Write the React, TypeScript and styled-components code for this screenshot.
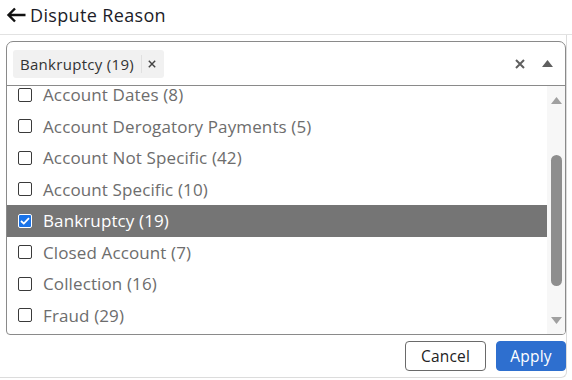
import React from 'react'
import styled, { createGlobalStyle } from 'styled-components'

const GlobalStyle = createGlobalStyle`
  html, body {
    margin: 0;
    padding: 0;
    background: #ffffff;
  }
  body {
    font-family: 'Open Sans', 'Liberation Sans', sans-serif;
  }
`

const Page = styled.div`
  width: 572px;
  height: 380px;
  overflow: hidden;
  background: #fff;
`

const Header = styled.div`
  height: 35px;
  box-sizing: border-box;
  display: flex;
  align-items: center;
  gap: 4px;
  padding: 0 0 5px 6px;
  border-bottom: 1px solid #e2e2e2;
`

const Title = styled.span`
  font-size: 18px;
  color: #1c1c28;
  letter-spacing: 0.35px;
`

const Panel = styled.div`
  width: 567px;
  box-sizing: border-box;
  padding: 6px 0 6px 6px;
  border-right: 1px solid #dcdcdc;
  border-bottom: 1px solid #dcdcdc;
  border-bottom-right-radius: 6px;
`

const SelectBox = styled.div`
  width: 560px;
  height: 294px;
  box-sizing: border-box;
  border: 1px solid #8a8a8a;
  border-radius: 7px 7px 4px 4px;
  display: flex;
  flex-direction: column;
  overflow: hidden;
`

const Control = styled.div`
  height: 44px;
  flex: none;
  box-sizing: border-box;
  display: flex;
  align-items: center;
  padding: 0 12px 0 6px;
  border-bottom: 1px solid #8a8a8a;
`

const Chip = styled.div`
  height: 28px;
  display: flex;
  align-items: center;
  background: #f1f1f1;
  border-radius: 3px;
  padding: 0 8px 0 7px;
  font-size: 15px;
  letter-spacing: 0.3px;
  color: #333;
`

const ChipDivider = styled.span`
  width: 1px;
  height: 18px;
  background: #e0e0e0;
  margin: 0 6px 0 7px;
`

const Spacer = styled.div`
  flex: 1;
`

const Indicators = styled.div`
  display: flex;
  align-items: center;
  gap: 17px;
`

const Body = styled.div`
  flex: 1;
  display: flex;
  min-height: 0;
`

const List = styled.div`
  flex: 1;
  overflow: hidden;
`

const ListInner = styled.div`
  margin-top: -7px;
`

const Row = styled.div<{ $active?: boolean }>`
  height: 31.5px;
  display: flex;
  align-items: center;
  gap: 11px;
  padding-left: 11px;
  background: ${(p) => (p.$active ? '#757575' : 'transparent')};
  color: ${(p) => (p.$active ? '#ffffff' : '#6d6d6d')};
  font-size: 17px;
  letter-spacing: 0.12px;
  white-space: nowrap;
`

const Box = styled.span<{ $checked?: boolean }>`
  width: 14px;
  height: 14px;
  box-sizing: border-box;
  border-radius: 2px;
  border: 1px solid ${(p) => (p.$checked ? '#ffffff' : '#3a3a3a')};
  background: ${(p) => (p.$checked ? '#1a73e8' : '#ffffff')};
  display: flex;
  align-items: center;
  justify-content: center;
  flex: none;
`

const Track = styled.div`
  width: 18px;
  flex: none;
  background: #f7f7f7;
  display: flex;
  flex-direction: column;
  align-items: center;
`

const ArrowCell = styled.div`
  height: 28px;
  display: flex;
  align-items: center;
  justify-content: center;
  flex: none;
`

const Thumb = styled.div`
  width: 11px;
  height: 131px;
  border-radius: 6px;
  background: #8e8e8e;
  margin-top: 41px;
`

const Footer = styled.div`
  display: flex;
  justify-content: flex-end;
  gap: 10px;
  padding-top: 6px;
`

const Button = styled.button<{ $primary?: boolean }>`
  height: 30px;
  width: ${(p) => (p.$primary ? '70px' : '81px')};
  box-sizing: border-box;
  padding: 0;
  font-family: inherit;
  font-size: 15.5px;
  letter-spacing: 0.2px;
  border-radius: 4px;
  border: 1px solid ${(p) => (p.$primary ? '#2e6fcf' : '#6a6a6a')};
  background: ${(p) => (p.$primary ? '#2e6fcf' : '#ffffff')};
  color: ${(p) => (p.$primary ? '#ffffff' : '#222')};
  cursor: pointer;
`

const options = [
  { label: 'Account Dates', count: 8 },
  { label: 'Account Derogatory Payments', count: 5 },
  { label: 'Account Not Specific', count: 42 },
  { label: 'Account Specific', count: 10 },
  { label: 'Bankruptcy', count: 19, checked: true },
  { label: 'Closed Account', count: 7 },
  { label: 'Collection', count: 16 },
  { label: 'Fraud', count: 29 },
]

const BackArrow = () => (
  <svg width="20" height="16" viewBox="0 0 20 16">
    <path d="M9 1.5 2.5 8 9 14.5M2.5 8H19.5" fill="none" stroke="#111" strokeWidth="2.4" />
  </svg>
)

const Cross = ({ size, color, width }: { size: number; color: string; width: number }) => (
  <svg width={size} height={size} viewBox="0 0 10 10">
    <path d="M1 1 9 9M9 1 1 9" stroke={color} strokeWidth={width} />
  </svg>
)

const Triangle = ({ down, color }: { down?: boolean; color: string }) => (
  <svg width="11" height="7" viewBox="0 0 11 7">
    <path d={down ? 'M0 0H11L5.5 7Z' : 'M5.5 0 11 7H0Z'} fill={color} />
  </svg>
)

const Check = () => (
  <svg width="10" height="8" viewBox="0 0 10 8">
    <path d="M1 4 3.8 6.6 9 1.2" fill="none" stroke="#fff" strokeWidth="1.8" />
  </svg>
)

export default function App() {
  return (
    <Page>
      <GlobalStyle />
      <Header>
        <BackArrow />
        <Title>Dispute Reason</Title>
      </Header>
      <Panel>
        <SelectBox>
          <Control>
            <Chip>
              Bankruptcy (19)
              <ChipDivider />
              <Cross size={8} color="#444" width={1.8} />
            </Chip>
            <Spacer />
            <Indicators>
              <Cross size={10} color="#5f5f5f" width={2} />
              <Triangle color="#5f5f5f" />
            </Indicators>
          </Control>
          <Body>
            <List>
              <ListInner>
                {options.map((o) => (
                  <Row key={o.label} $active={o.checked}>
                    <Box $checked={o.checked}>{o.checked && <Check />}</Box>
                    {o.label} ({o.count})
                  </Row>
                ))}
              </ListInner>
            </List>
            <Track>
              <ArrowCell>
                <Triangle color="#a0a0a0" />
              </ArrowCell>
              <Thumb />
              <Spacer />
              <ArrowCell>
                <Triangle down color="#a0a0a0" />
              </ArrowCell>
            </Track>
          </Body>
        </SelectBox>
        <Footer>
          <Button>Cancel</Button>
          <Button $primary>Apply</Button>
        </Footer>
      </Panel>
    </Page>
  )
}
